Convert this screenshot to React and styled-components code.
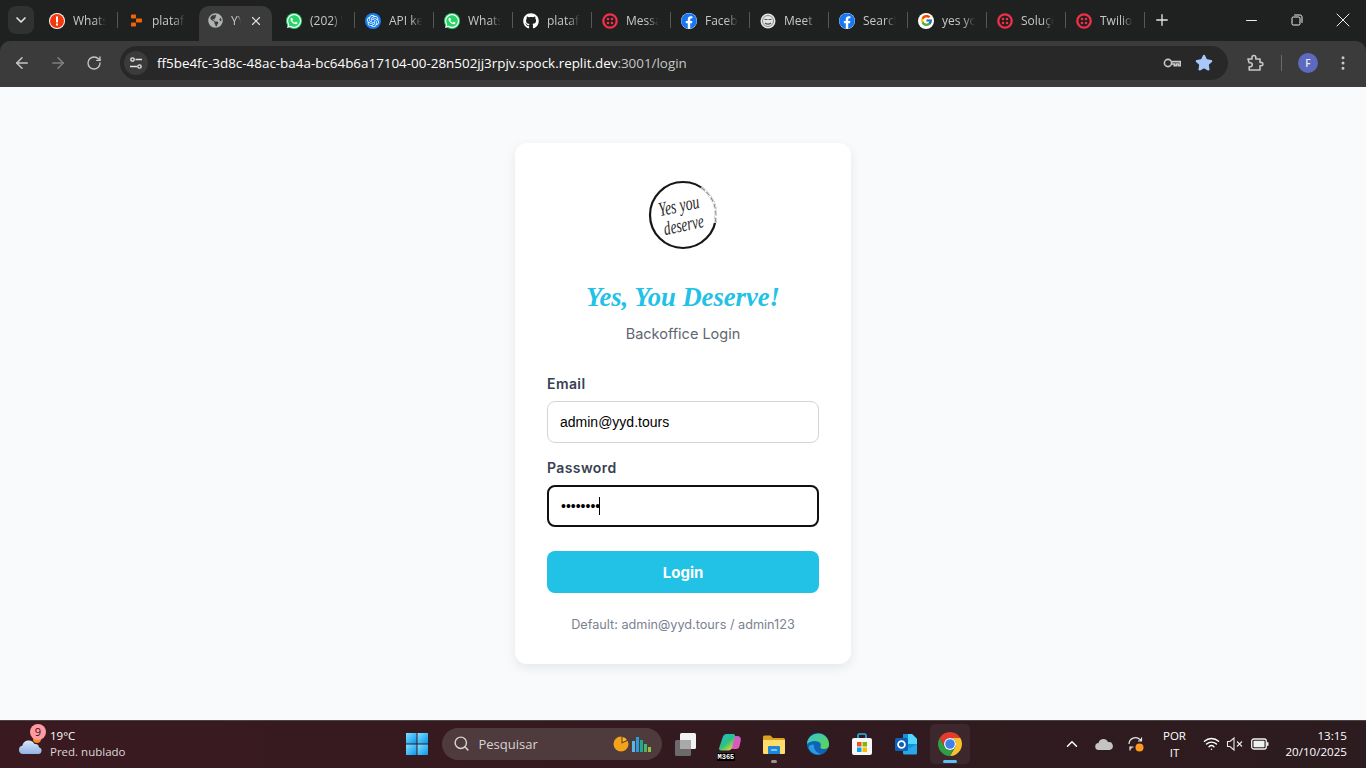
import React from "react";
import styled, { createGlobalStyle } from "styled-components";
import { ArrowLeft, ArrowRight, ChevronDown, ChevronUp, EllipsisVertical, Minus, Plus, RotateCw, Search, Star, Wifi, X } from "lucide-react";
import { FaFacebook, FaGithub, FaGlobeAmericas, FaWhatsapp } from "react-icons/fa";
import { FcGoogle } from "react-icons/fc";
import { SiOpenai } from "react-icons/si";

const GlobalStyle = createGlobalStyle`
  html, body { margin: 0; padding: 0; height: 100%; overflow: hidden; }
  * { box-sizing: border-box; }
  #root { height: 100%; }
`;

const Screen = styled.div`
  display: flex;
  flex-direction: column;
  width: 1366px;
  height: 768px;
  font-family: "Open Sans", "Noto Sans", sans-serif;
`;

/* browser chrome */
const Browser = styled.header`
  background: #1f2020;
`;

const TabStrip = styled.div`
  display: flex;
  align-items: flex-start;
  height: 41px;
  padding-left: 8px;
`;

const TabMenu = styled.button`
  display: flex;
  flex: 0 0 26px;
  align-items: center;
  justify-content: center;
  height: 28px;
  margin: 6px 4px 0 0;
  padding: 0;
  border: 0;
  border-radius: 8px;
  background: #303131;
  color: #e3e3e3;
`;

const Tab = styled.div`
  position: relative;
  display: flex;
  flex: 0 0 79px;
  align-items: center;
  gap: 8px;
  width: 79px;
  min-width: 0;
  height: 35px;
  margin-top: 6px;
  padding-left: 11px;
  color: #c7c7c7;
  font-size: 12px;

  ${(p) => p.$active && `
    &::before {
      content: "";
      position: absolute;
      inset: 0 3px;
      z-index: 0;
      background: #3b3b3b;
      border-radius: 10px 10px 0 0;
    }
    & > * { position: relative; z-index: 1; }
  `}

  ${(p) => p.$separator && `
    &::after {
      content: "";
      position: absolute;
      top: 6px;
      right: -1px;
      width: 1px;
      height: 16px;
      background: #565757;
    }
  `}
`;

const Favicon = styled.span`
  display: flex;
  flex: 0 0 16px;
  align-items: center;
  justify-content: center;
  width: 16px;
  height: 16px;
  margin-top: -6px;
  border-radius: 50%;
  background: ${(p) => p.$bg || "transparent"};
  color: ${(p) => p.$color || "#fff"};
`;

const TabTitle = styled.span`
  flex: 1;
  min-width: 0;
  margin-top: -6px;
  margin-right: ${(p) => (p.$active ? "0" : "11px")};
  overflow: hidden;
  white-space: nowrap;
  -webkit-mask-image: linear-gradient(to right, #000 65%, transparent 100%);
  mask-image: linear-gradient(to right, #000 65%, transparent 100%);
`;

const TabClose = styled.span`
  display: flex;
  flex: 0 0 16px;
  margin: -6px 10px 0 0;
  color: #e3e3e3;
`;

const NewTab = styled.span`
  display: flex;
  margin: 11px 0 0 9px;
  color: #e3e3e3;
`;

const WindowControls = styled.div`
  display: flex;
  margin-left: auto;
  color: #f0f0f0;
`;

const WindowButton = styled.span`
  display: flex;
  align-items: center;
  justify-content: center;
  width: 46px;
  height: 40px;
`;

const Toolbar = styled.div`
  display: flex;
  align-items: center;
  height: 46px;
  padding: 0 12px 2px 4px;
  border-radius: 10px 10px 0 0;
  background: #3b3b3b;
`;

const NavButton = styled.span`
  display: flex;
  flex: 0 0 36px;
  justify-content: center;
  color: ${(p) => (p.$dim ? "#808080" : "#c7c7c7")};
`;

const Omnibox = styled.div`
  display: flex;
  flex: 0 0 1108px;
  align-items: center;
  height: 34px;
  margin-left: 8px;
  padding: 0 15px 0 4px;
  border-radius: 17px;
  background: #282828;
`;

const SiteChip = styled.span`
  display: flex;
  align-items: center;
  justify-content: center;
  width: 24px;
  height: 24px;
  border-radius: 50%;
  background: #3b3b3b;
  color: #e3e3e3;
`;

const Url = styled.div`
  margin-left: 9px;
  color: #fff;
  font-size: 13.42px;
  white-space: nowrap;
`;

const UrlRest = styled.span`
  color: #c7c7c7;
`;

const OmniActions = styled.div`
  display: flex;
  align-items: center;
  gap: 13px;
  margin-left: auto;
`;

const ToolActions = styled.div`
  display: flex;
  align-items: center;
  margin-left: 18px;
  color: #c7c7c7;
`;

const ToolDivider = styled.span`
  width: 1px;
  height: 16px;
  margin: 0 16px 0 17px;
  background: #6a6a6a;
`;

const Avatar = styled.span`
  display: flex;
  align-items: center;
  justify-content: center;
  width: 20px;
  height: 20px;
  border-radius: 50%;
  background: #5c6bc0;
  color: #e8eaf6;
  font-size: 10px;
  font-weight: 600;
`;

const MenuDots = styled.span`
  display: flex;
  margin-left: 16px;
  color: #c7c7c7;
`;

/* page */
const Page = styled.main`
  display: flex;
  flex: 1;
  align-items: center;
  justify-content: center;
  background: #f8fafc;
  font-family: Inter, "Noto Sans", sans-serif;
`;

const Card = styled.form`
  display: flex;
  flex-direction: column;
  width: 336px;
  height: 521px;
  padding: 32px;
  border-radius: 12px;
  background: #fff;
  box-shadow: 0 4px 12px rgba(0, 0, 0, 0.08);
`;

const LogoWrap = styled.div`
  display: flex;
  justify-content: center;
  height: 80px;
`;

const Title = styled.h1`
  margin: 24px 0 0;
  color: #22c1e6;
  font-family: "Liberation Serif", serif;
  font-size: 26.6px;
  font-style: italic;
  font-weight: 700;
  line-height: 36px;
  text-align: center;
`;

const Subtitle = styled.p`
  margin: 9px 0 0;
  color: #5f6670;
  font-size: 14.5px;
  line-height: 20px;
  text-align: center;
`;

const Fields = styled.div`
  margin-top: 31px;
`;

const Field = styled.div`
  position: relative;
  margin-bottom: 16px;
`;

const Label = styled.label`
  display: block;
  margin-bottom: 9px;
  color: #374151;
  font-size: 14px;
  font-weight: 600;
  line-height: 17px;
  letter-spacing: 0.4px;
`;

const Input = styled.input`
  display: block;
  width: 100%;
  height: 42px;
  padding: 0 12px;
  border: ${(p) => (p.$focused ? "2px solid #101010" : "1px solid #d1d5db")};
  border-radius: 8px;
  outline: 0;
  background: #fff;
  color: #000;
  font-family: "Liberation Sans", Arial, sans-serif;
  font-size: 14px;
`;

const Caret = styled.span`
  position: absolute;
  left: 52px;
  bottom: 12px;
  width: 1px;
  height: 18px;
  background: #000;
`;

const Submit = styled.button`
  flex: 0 0 42px;
  width: 100%;
  margin-top: 8px;
  padding: 0;
  border: 0;
  border-radius: 8px;
  background: #22c1e6;
  color: #fff;
  font-family: Inter, sans-serif;
  font-size: 15px;
  font-weight: 700;
`;

const Hint = styled.p`
  margin: 23px 0 0;
  color: #7b8290;
  font-size: 12.7px;
  line-height: 18px;
  text-align: center;
`;

/* taskbar */
const Taskbar = styled.footer`
  display: grid;
  grid-template-columns: 1fr auto 1fr;
  align-items: center;
  height: 48px;
  padding-bottom: 2px;
  border-top: 1px solid #4b4444;
  background: linear-gradient(to right, #3a1a20, #341a20 45%, #2c1c1f);
  color: #fff;
  font-size: 12px;
`;

const Widget = styled.div`
  display: flex;
  align-items: center;
  gap: 6px;
  padding-left: 18px;
`;

const WeatherIcon = styled.span`
  position: relative;
  display: flex;
  width: 26px;
  height: 26px;
`;

const Badge = styled.span`
  position: absolute;
  top: -7px;
  right: -2px;
  display: flex;
  align-items: center;
  justify-content: center;
  width: 16px;
  height: 16px;
  border-radius: 50%;
  background: #ff9aa2;
  color: #2a1215;
  font-size: 11px;
`;

const WidgetText = styled.div`
  line-height: 16px;
  font-size: 11.5px;
`;

const WidgetSub = styled.div`
  color: #dcd8d8;
`;

const Dock = styled.div`
  display: flex;
  align-items: center;
  padding-left: 8px;
`;

const StartButton = styled.span`
  display: flex;
  width: 24px;
  height: 24px;
  margin: 0 13px 0 0;
`;

const SearchBox = styled.div`
  display: flex;
  align-items: center;
  width: 220px;
  height: 32px;
  padding: 0 9px 0 11px;
  border-radius: 16px;
  background: #4f3b3e;
  color: #d8d4d4;
  font-size: 13px;
`;

const SearchLabel = styled.span`
  margin-left: 9px;
`;

const SearchArt = styled.span`
  display: flex;
  margin-left: auto;
`;

const DockItem = styled.span`
  position: relative;
  display: flex;
  align-items: center;
  justify-content: center;
  width: 40px;
  height: 40px;
  margin-left: 4px;
  border-radius: 5px;
  background: ${(p) => (p.$active ? "rgba(255, 255, 255, 0.06)" : "transparent")};

  ${(p) => p.$open && `
    &::after {
      content: "";
      position: absolute;
      bottom: 1px;
      left: 50%;
      width: ${p.$active ? "14px" : "6px"};
      height: 3px;
      border-radius: 2px;
      transform: translateX(-50%);
      background: ${p.$active ? "#5cc0f5" : "#9a9292"};
    }
  `}
`;

const M365Tag = styled.span`
  position: absolute;
  left: 7px;
  bottom: 3px;
  padding: 0 1px;
  background: #000;
  color: #fff;
  font-family: "Liberation Mono", monospace;
  font-size: 7px;
  font-weight: 700;
  line-height: 8px;
`;

const Tray = styled.div`
  display: flex;
  align-items: center;
  justify-content: flex-end;
  padding-right: 19px;
`;

const TrayIcon = styled.span`
  display: flex;
  flex: 0 0 ${(p) => p.$w || 32}px;
  justify-content: center;
  color: #fff;
`;

const Language = styled.div`
  flex: 0 0 50px;
  font-size: 11.5px;
  line-height: 17px;
  text-align: center;
`;

const Clock = styled.div`
  margin-left: 12px;
  font-size: 11.6px;
  line-height: 16px;
  text-align: right;
`;

const AlertIcon = () => (
  <svg width="16" height="16" viewBox="0 0 16 16">
    <circle cx="8" cy="8" r="8" fill="#fff" />
    <circle cx="8" cy="8" r="7" fill="#f4380c" />
    <rect x="7" y="3.500" width="2" height="6" fill="#fff" />
    <rect x="7" y="10.500" width="2" height="2" fill="#fff" />
  </svg>
);

const ReplitIcon = () => (
  <svg width="16" height="16" viewBox="0 0 16 16" fill="#f26207">
    <rect x="3" y="1.500" width="5" height="4" rx="0.800" />
    <rect x="8" y="5.500" width="6" height="4" rx="0.800" />
    <rect x="3" y="9.500" width="5" height="4" rx="0.800" />
  </svg>
);

const MeetIcon = () => (
  <svg width="16" height="16" viewBox="0 0 16 16">
    <circle cx="8" cy="8" r="7.500" fill="#e4e4e4" />
    <circle cx="8" cy="8" r="5.500" fill="none" stroke="#8c8c8c" strokeWidth="1" />
    <path d="M4.500 6.500h3M8.500 6.500h3M5 10c2 1.400 4 1.400 6 0" fill="none" stroke="#555" strokeWidth="1.200" />
  </svg>
);

const TwilioMark = () => (
  <svg width="16" height="16" viewBox="0 0 16 16">
    <circle cx="8" cy="8" r="6.700" fill="none" stroke="#f22f46" strokeWidth="2.300" />
    <circle cx="6" cy="6" r="1.300" fill="#f22f46" />
    <circle cx="10" cy="6" r="1.300" fill="#f22f46" />
    <circle cx="6" cy="10" r="1.300" fill="#f22f46" />
    <circle cx="10" cy="10" r="1.300" fill="#f22f46" />
  </svg>
);

const tabs = [
  { title: "WhatsApp", icon: <AlertIcon />, separator: true },
  { title: "plataforma", icon: <ReplitIcon /> },
  { title: "YYD Backoffice", icon: <FaGlobeAmericas size={15} color="#b0b3b2" />, active: true },
  { title: "(202) WhatsApp", icon: <FaWhatsapp size={16} />, bg: "#25d366", separator: true },
  { title: "API keys", icon: <SiOpenai size={12} />, bg: "#1a7ff0", separator: true },
  { title: "WhatsApp", icon: <FaWhatsapp size={16} />, bg: "#25d366", separator: true },
  { title: "plataforma", icon: <FaGithub size={16} />, separator: true },
  { title: "Messaging", icon: <TwilioMark />, separator: true },
  { title: "Facebook", icon: <FaFacebook size={16} color="#1877f2" />, bg: "#fff", separator: true },
  { title: "Meet Google", icon: <MeetIcon />, separator: true },
  { title: "Search", icon: <FaFacebook size={16} color="#1877f2" />, bg: "#fff", separator: true },
  { title: "yes you deserve", icon: <FcGoogle size={13} />, bg: "#fff", separator: true },
  { title: "Soluções", icon: <TwilioMark />, separator: true },
  { title: "Twilio", icon: <TwilioMark />, separator: true },
];

const SiteSettingsIcon = () => (
  <svg width="14" height="14" viewBox="0 0 14 14" fill="none" stroke="currentColor" strokeWidth="1.300">
    <circle cx="3.500" cy="3.500" r="1.700" />
    <path d="M6.500 3.500H13M1 10.500h7" />
    <circle cx="10.500" cy="10.500" r="1.700" />
  </svg>
);

const KeyIcon = () => (
  <svg width="20" height="20" viewBox="0 0 20 20" fill="none" stroke="#c7c7c7" strokeWidth="1.600">
    <circle cx="6" cy="10" r="3.600" />
    <path d="M9.600 8.600h8.600v4h-2v-1.600h-2v1.600h-2v-1.600H9.400" />
  </svg>
);

const PuzzleIcon = () => (
  <svg width="18" height="18" viewBox="0 0 18 18" fill="none" stroke="#c7c7c7" strokeWidth="1.600" strokeLinejoin="round">
    <path d="M2 5h4V3.400a1.900 1.900 0 0 1 3.800 0V5h4.200v3.400h1.200a1.700 1.700 0 0 1 0 3.400H14V16H3.200v-3.200h1a2 2 0 0 0 0-4h-1L2 5z" />
  </svg>
);

const RestoreIcon = () => (
  <svg width="12" height="12" viewBox="0 0 12 12" fill="none" stroke="currentColor" strokeWidth="1">
    <rect x="1" y="3" width="8" height="8" rx="1.300" />
    <path d="M3.200 1h6a2 2 0 0 1 1.800 1.800v6" />
  </svg>
);

const YydLogo = () => (
  <svg width="80" height="80" viewBox="0 0 80 80">
    <circle cx="40" cy="40" r="33" fill="none" stroke="#161616" strokeWidth="2.200" />
    <path d="M58 12.500 A33 33 0 0 1 72 48" fill="none" stroke="#fff" strokeWidth="2.600" />
    <path d="M58 12.500 A33 33 0 0 1 72 48" fill="none" stroke="#8a8a8a" strokeWidth="1.100" strokeDasharray="5 2" />
    <g fill="#2a2a2a" fontFamily="'Liberation Serif', serif" fontStyle="italic" textAnchor="middle">
      <text transform="translate(37 37) rotate(-12) scale(0.86 1.250)" fontSize="16">Yes you</text>
      <text transform="translate(42 56) rotate(-12) scale(0.860 1.250)" fontSize="15.500">deserve</text>
    </g>
  </svg>
);

const WeatherArt = () => (
  <svg width="26" height="26" viewBox="0 0 26 26">
    <defs>
      <linearGradient id="cloudFill" x1="0" y1="0" x2="0" y2="1">
        <stop offset="0" stopColor="#dbe9fb" />
        <stop offset="1" stopColor="#8fb2e6" />
      </linearGradient>
    </defs>
    <circle cx="19" cy="8" r="4" fill="#f28c1e" />
    <path d="M5 23a4.200 4.200 0 0 1-.7-8.300A6.500 6.500 0 0 1 16.500 13a4 4 0 0 1 4.500 3.200A3.500 3.500 0 0 1 21 23H5z" fill="url(#cloudFill)" />
  </svg>
);

const WindowsLogo = () => (
  <svg width="24" height="24" viewBox="0 0 24 24">
    <defs>
      <linearGradient id="winFill" x1="0" y1="0" x2="1" y2="1">
        <stop offset="0" stopColor="#7fe0ff" />
        <stop offset="1" stopColor="#0a94ee" />
      </linearGradient>
    </defs>
    <rect x="1" y="1" width="10.500" height="10.500" fill="url(#winFill)" />
    <rect x="12.500" y="1" width="10.500" height="10.500" fill="url(#winFill)" />
    <rect x="1" y="12.500" width="10.500" height="10.500" fill="url(#winFill)" />
    <rect x="12.500" y="12.500" width="10.500" height="10.500" fill="url(#winFill)" />
  </svg>
);

const SearchWidgetArt = () => (
  <svg width="40" height="20" viewBox="0 0 40 20">
    <circle cx="8" cy="10" r="7.500" fill="#f5a21b" />
    <path d="M8.500 9.500V2a7.500 7.500 0 0 1 7 4.500l-7 3z" fill="#5a3b1e" />
    <path d="M9.500 8V3a6 6 0 0 1 4.500 3z" fill="#f7b53a" />
    <rect x="19" y="7" width="3" height="11" fill="#58b6e8" />
    <rect x="23" y="3" width="3" height="15" fill="#2b9dd6" />
    <rect x="27" y="6" width="3" height="12" fill="#1ea890" />
    <rect x="31" y="10" width="3" height="8" fill="#4db26a" />
    <rect x="35" y="13" width="3" height="5" fill="#9dbb3d" />
  </svg>
);

const TaskViewIcon = () => (
  <svg width="24" height="24" viewBox="0 0 24 24">
    <rect x="1" y="8" width="16" height="16" rx="1.500" fill="#6b6b6b" />
    <rect x="6" y="1" width="16" height="16" rx="1.500" fill="#f2f2f2" />
    <rect x="6" y="8" width="11" height="9" fill="#a9a9a9" />
  </svg>
);

const CopilotIcon = () => (
  <svg width="24" height="24" viewBox="0 0 24 24">
    <defs>
      <linearGradient id="copA" x1="0" y1="0" x2="0.800" y2="1">
        <stop offset="0" stopColor="#2fb4f0" />
        <stop offset="0.550" stopColor="#29c27d" />
        <stop offset="1" stopColor="#f6d13c" />
      </linearGradient>
      <linearGradient id="copB" x1="0" y1="0" x2="1" y2="1">
        <stop offset="0" stopColor="#b05bea" />
        <stop offset="1" stopColor="#f25a9d" />
      </linearGradient>
    </defs>
    <path d="M15 4h4.500a3.500 3.500 0 0 1 3.300 4.300L21.500 14a3.500 3.500 0 0 1-3.400 3H10z" fill="url(#copB)" />
    <path d="M8.500 2h6.800c1.200 0 2 1 1.700 2.200L14 15.500a4 4 0 0 1-3.800 3H3a2 2 0 0 1-1.900-2.600L5 4.500A3.500 3.500 0 0 1 8.500 2z" fill="url(#copA)" />
  </svg>
);

const ExplorerIcon = () => (
  <svg width="24" height="24" viewBox="0 0 24 24">
    <path d="M1 5a1.500 1.500 0 0 1 1.500-1.500h6L11 6h10.500A1.500 1.500 0 0 1 23 7.500V10H1z" fill="#d9a21f" />
    <path d="M1 8h22v13a1 1 0 0 1-1 1H2a1 1 0 0 1-1-1z" fill="#ffdc6b" />
    <path d="M7 14h10a1 1 0 0 1 1 1v7H6v-7a1 1 0 0 1 1-1z" fill="#1e88d6" />
    <rect x="9" y="17" width="6" height="2" rx="0.500" fill="#7cc6f5" />
  </svg>
);

const EdgeIcon = () => (
  <svg width="24" height="24" viewBox="0 0 24 24">
    <defs>
      <linearGradient id="edgeA" x1="0" y1="0" x2="1" y2="1">
        <stop offset="0" stopColor="#37c6d0" />
        <stop offset="1" stopColor="#5fd64a" />
      </linearGradient>
    </defs>
    <circle cx="12" cy="12" r="11" fill="#0f63b8" />
    <path d="M1 12a11 11 0 0 1 22 1c0 3-3 4.500-6 4-1.800-.3-3-1.400-2.500-2.600.4-1 .6-2.400-.5-3.600C11.500 8.300 5 8 1 12z" fill="url(#edgeA)" />
    <path d="M8 14c0 4 3 7 7 8-5 1.500-11-1-12.500-7C4 12.500 8 11.500 8 14z" fill="#2a9de0" />
  </svg>
);

const StoreIcon = () => (
  <svg width="24" height="24" viewBox="0 0 24 24">
    <path d="M8 6V3.500A1.500 1.500 0 0 1 9.500 2h5A1.500 1.500 0 0 1 16 3.500V6" fill="none" stroke="#2fb4e8" strokeWidth="1.600" />
    <rect x="2" y="6" width="20" height="17" rx="2" fill="#f7f7f7" />
    <rect x="7" y="10" width="4.500" height="4.500" fill="#f25022" />
    <rect x="12.500" y="10" width="4.500" height="4.500" fill="#7fba00" />
    <rect x="7" y="15.500" width="4.500" height="4.500" fill="#00a4ef" />
    <rect x="12.500" y="15.500" width="4.500" height="4.500" fill="#ffb900" />
  </svg>
);

const OutlookIcon = () => (
  <svg width="24" height="24" viewBox="0 0 24 24">
    <path d="M9 2h9l5 5v10a1.500 1.500 0 0 1-1.500 1.500H9z" fill="#1490df" />
    <path d="M14 2h4l5 5v5h-9z" fill="#50d9ff" />
    <path d="M9 12l7 4 7-4v9a1.500 1.500 0 0 1-1.500 1.500H10.500A1.500 1.500 0 0 1 9 21z" fill="#28a8ea" />
    <rect x="1" y="6" width="13" height="13" rx="1.500" fill="#0f5fb5" />
    <circle cx="7.500" cy="12.500" r="3.400" fill="none" stroke="#fff" strokeWidth="1.800" />
  </svg>
);

const ChromeIcon = () => (
  <svg width="24" height="24" viewBox="4 4 40 40">
    <path d="M24 4A20 20 0 0 1 41.320 14H24A10 10 0 0 0 15.340 29L6.680 14A20 20 0 0 1 24 4Z" fill="#e33b2e" />
    <path d="M41.320 14A20 20 0 0 1 24 44L32.660 29A10 10 0 0 0 24 14Z" fill="#fbc02d" />
    <path d="M24 44A20 20 0 0 1 6.680 14L15.340 29A10 10 0 0 0 32.660 29Z" fill="#2f9e44" />
    <circle cx="24" cy="24" r="10" fill="#fff" />
    <circle cx="24" cy="24" r="8" fill="#3f7fe8" />
  </svg>
);

const OneDriveIcon = () => (
  <svg width="18" height="14" viewBox="0 0 18 14">
    <path d="M4 13a3.500 3.500 0 0 1-.5-7A5 5 0 0 1 13 5a4 4 0 0 1 1.500 8H4z" fill="#c4c4c4" />
  </svg>
);

const SyncIcon = () => (
  <svg width="18" height="18" viewBox="0 0 18 18" fill="none" stroke="#e8e8e8" strokeWidth="1.200">
    <path d="M2 9a6.500 6.500 0 0 1 11-4.500L14.500 6M14.500 2.500V6H11" />
    <path d="M3 11.500l1.500 2M3 15.500v-3.500h3.500" />
    <circle cx="12.500" cy="12.500" r="4" fill="#ff9a1f" stroke="none" />
  </svg>
);

const MuteIcon = () => (
  <svg width="18" height="16" viewBox="0 0 18 16" fill="none" stroke="#e8e8e8" strokeWidth="1.100">
    <path d="M1.500 5.500h2.500L8 2v12l-4-3.500H1.500z" />
    <path d="M11 5.500l5 5M16 5.500l-5 5" />
  </svg>
);

const BatteryIcon = () => (
  <svg width="18" height="12" viewBox="0 0 18 12">
    <rect x="0.700" y="1" width="14.600" height="10" rx="2" fill="none" stroke="#f0f0f0" strokeWidth="1.300" />
    <rect x="2.500" y="2.800" width="11" height="6.400" rx="0.700" fill="#f0f0f0" />
    <rect x="16" y="4" width="1.500" height="4" rx="0.700" fill="#f0f0f0" />
  </svg>
);

export default function App() {
  return (
    <Screen>
      <GlobalStyle />
      <Browser>
        <TabStrip>
          <TabMenu type="button">
            <ChevronDown size={16} strokeWidth={2.500} />
          </TabMenu>
          {tabs.map((tab) => (
            <Tab key={tab.title + tab.bg} $active={tab.active} $separator={tab.separator}>
              <Favicon $bg={tab.bg}>{tab.icon}</Favicon>
              <TabTitle $active={tab.active}>{tab.title}</TabTitle>
              {tab.active && (
                <TabClose>
                  <X size={14} strokeWidth={2} />
                </TabClose>
              )}
            </Tab>
          ))}
          <NewTab>
            <Plus size={18} strokeWidth={1.800} />
          </NewTab>
          <WindowControls>
            <WindowButton>
              <Minus size={17} strokeWidth={1.400} />
            </WindowButton>
            <WindowButton>
              <RestoreIcon />
            </WindowButton>
            <WindowButton>
              <X size={24} strokeWidth={1} />
            </WindowButton>
          </WindowControls>
        </TabStrip>
        <Toolbar>
          <NavButton>
            <ArrowLeft size={18} />
          </NavButton>
          <NavButton $dim>
            <ArrowRight size={18} />
          </NavButton>
          <NavButton>
            <RotateCw size={16} />
          </NavButton>
          <Omnibox>
            <SiteChip>
              <SiteSettingsIcon />
            </SiteChip>
            <Url>
              ff5be4fc-3d8c-48ac-ba4a-bc64b6a17104-00-28n502jj3rpjv.spock.replit.dev
              <UrlRest>:3001/login</UrlRest>
            </Url>
            <OmniActions>
              <KeyIcon />
              <Star size={18} fill="#a8c7fa" color="#a8c7fa" />
            </OmniActions>
          </Omnibox>
          <ToolActions>
            <PuzzleIcon />
            <ToolDivider />
            <Avatar>F</Avatar>
            <MenuDots>
              <EllipsisVertical size={18} />
            </MenuDots>
          </ToolActions>
        </Toolbar>
      </Browser>

      <Page>
        <Card>
          <LogoWrap>
            <YydLogo />
          </LogoWrap>
          <Title>Yes, You Deserve!</Title>
          <Subtitle>Backoffice Login</Subtitle>
          <Fields>
            <Field>
              <Label htmlFor="email">Email</Label>
              <Input id="email" type="email" defaultValue="admin@yyd.tours" />
            </Field>
            <Field>
              <Label htmlFor="password">Password</Label>
              <Input id="password" type="password" defaultValue="admin123" $focused />
              <Caret />
            </Field>
          </Fields>
          <Submit type="button">Login</Submit>
          <Hint>Default: admin@yyd.tours / admin123</Hint>
        </Card>
      </Page>

      <Taskbar>
        <Widget>
          <WeatherIcon>
            <WeatherArt />
            <Badge>9</Badge>
          </WeatherIcon>
          <WidgetText>
            <div>19°C</div>
            <WidgetSub>Pred. nublado</WidgetSub>
          </WidgetText>
        </Widget>
        <Dock>
          <StartButton>
            <WindowsLogo />
          </StartButton>
          <SearchBox>
            <Search size={17} />
            <SearchLabel>Pesquisar</SearchLabel>
            <SearchArt>
              <SearchWidgetArt />
            </SearchArt>
          </SearchBox>
          <DockItem>
            <TaskViewIcon />
          </DockItem>
          <DockItem>
            <CopilotIcon />
            <M365Tag>M365</M365Tag>
          </DockItem>
          <DockItem $open>
            <ExplorerIcon />
          </DockItem>
          <DockItem>
            <EdgeIcon />
          </DockItem>
          <DockItem>
            <StoreIcon />
          </DockItem>
          <DockItem>
            <OutlookIcon />
          </DockItem>
          <DockItem $open $active>
            <ChromeIcon />
          </DockItem>
        </Dock>
        <Tray>
          <TrayIcon $w={26}>
            <ChevronUp size={18} />
          </TrayIcon>
          <TrayIcon $w={38}>
            <OneDriveIcon />
          </TrayIcon>
          <TrayIcon $w={26}>
            <SyncIcon />
          </TrayIcon>
          <Language>
            <div>POR</div>
            <div>IT</div>
          </Language>
          <TrayIcon $w={24}>
            <Wifi size={17} />
          </TrayIcon>
          <TrayIcon $w={24}>
            <MuteIcon />
          </TrayIcon>
          <TrayIcon $w={26}>
            <BatteryIcon />
          </TrayIcon>
          <Clock>
            <div>13:15</div>
            <div>20/10/2025</div>
          </Clock>
        </Tray>
      </Taskbar>
    </Screen>
  );
}
